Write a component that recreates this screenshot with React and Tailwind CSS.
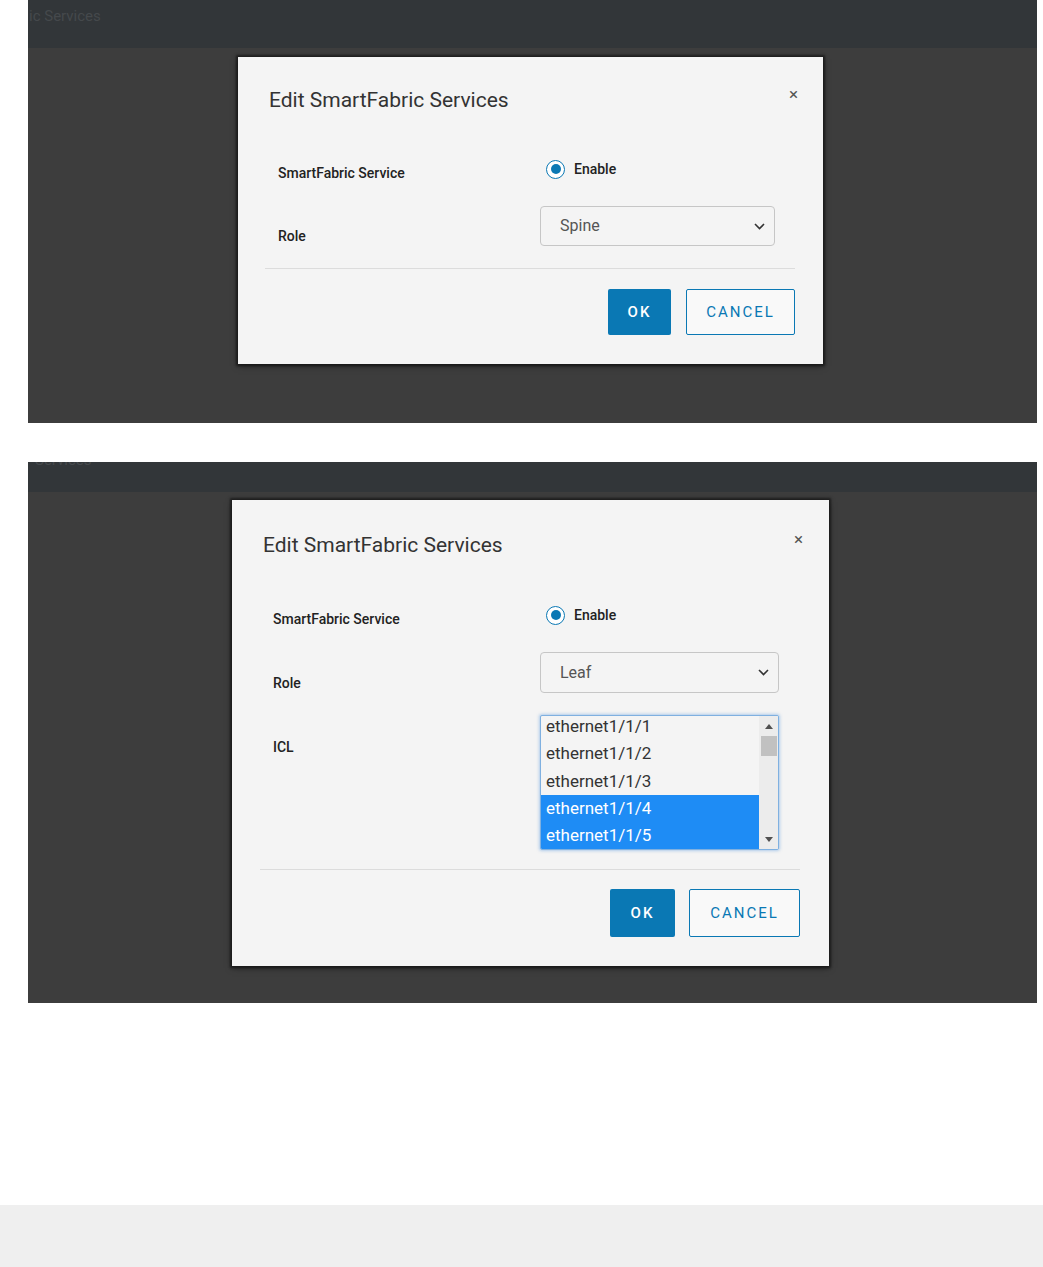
import React from "react";

const font = { fontFamily: "Roboto, 'Liberation Sans', sans-serif" };

const Radio = () => (
    <div className="flex items-center h-[22px]">
        <span className="w-[19px] h-[19px] rounded-full border-[1.5px] border-[#0a78b4] bg-white flex items-center justify-center">
            <span className="w-[10px] h-[10px] rounded-full bg-[#0a78b4]" />
        </span>
        <span className="ml-[9px] text-[14px] font-medium text-[#222]">Enable</span>
    </div>
);

const Chevron = () => (
    <svg width="11" height="7" viewBox="0 0 11 7" fill="none">
        <path d="M1 1l4.5 4.5L10 1" stroke="#333" strokeWidth="1.6" />
    </svg>
);

const Select = ({ value, width, height }) => (
    <div
        className={`flex items-center justify-between rounded-[4px] border border-[#c6c6c6] bg-[#f4f4f4] pl-[19px] pr-[9px] ${width} ${height}`}
    >
        <span className="text-[16px] text-[#555]">{value}</span>
        <Chevron />
    </div>
);

const Label = ({ children, offset }) => (
    <div className={`text-[14px] font-medium text-[#222] leading-[20px] ${offset}`}>{children}</div>
);

const Buttons = ({ okW, cancelW, h, gap }) => (
    <div className={`flex justify-end ${gap}`}>
        <button className={`${okW} ${h} rounded-[2px] bg-[#0a78b4] text-white text-[15px] font-medium tracking-[2px]`}>
            OK
        </button>
        <button className={`${cancelW} ${h} rounded-[2px] border border-[#0a78b4] bg-[#f9f9f9] text-[#0a78b4] text-[15px] tracking-[2px]`}>
            CANCEL
        </button>
    </div>
);

const IclList = () => {
    const items = ["ethernet1/1/1", "ethernet1/1/2", "ethernet1/1/3", "ethernet1/1/4", "ethernet1/1/5"];
    return (
        <div className="w-[239px] h-[135px] rounded-[2px] border border-[#7fb0e0] shadow-[0_0_3px_1px_rgba(110,165,225,0.5)] bg-[#f4f4f4] flex overflow-hidden">
            <div className="flex-1 overflow-hidden">
                <div className="-mt-[3px]">
                    {items.map((it, i) => (
                        <div
                            key={it}
                            className={`h-[27.3px] leading-[27px] pl-[5px] text-[17px] ${
                                i >= 3 ? "bg-[#1e8cf5] text-white" : "text-[#333]"
                            }`}
                        >
                            {it}
                        </div>
                    ))}
                </div>
            </div>
            <div className="w-[19px] bg-[#ececec] flex flex-col items-center">
                <div className="h-[20px] flex items-center justify-center">
                    <svg width="8" height="5" viewBox="0 0 8 5"><path d="M0 5L4 0l4 5z" fill="#505050" /></svg>
                </div>
                <div className="w-[16px] h-[20px] bg-[#c1c1c1]" />
                <div className="flex-1" />
                <div className="h-[20px] flex items-center justify-center">
                    <svg width="8" height="5" viewBox="0 0 8 5"><path d="M0 0h8L4 5z" fill="#505050" /></svg>
                </div>
            </div>
        </div>
    );
};

const DialogHead = ({ pt, px }) => (
    <div className={`flex justify-between ${pt} ${px}`}>
        <div className="text-[21px] leading-[26px] text-[#333]">Edit SmartFabric Services</div>
        <div className="text-[17px] leading-[16px] text-[#555] mt-[-1px]">×</div>
    </div>
);

export default function App() {
    return (
        <div className="min-h-[1267px] bg-white flex flex-col" style={font}>
            {/* first screenshot: spine */}
            <div className="ml-[28px] w-[1009px] h-[423px] bg-[#3d3d3d] flex flex-col overflow-hidden">
                <div className="h-[48px] shrink-0 bg-[#323639] overflow-hidden">
                    <div className="ml-[1px] mt-[5px] text-[15px] text-[#45494c]">ic Services</div>
                </div>
                <div className="ml-[210px] mt-[9px] w-[585px] h-[307px] bg-[#f4f4f4] shadow-[0_0_2px_2px_rgba(20,20,20,0.7),0_2px_6px_rgba(0,0,0,0.5)]">
                    <DialogHead pt="pt-[30px]" px="pl-[31px] pr-[25px]" />
                    <div className="mt-[45px] flex pl-[40px]">
                        <div className="w-[262px]">
                            <Label offset="pt-[5px]">SmartFabric Service</Label>
                        </div>
                        <div className="pl-[6px]">
                            <Radio />
                        </div>
                    </div>
                    <div className="mt-[23px] flex pl-[40px]">
                        <div className="w-[262px]">
                            <Label offset="pt-[20px]">Role</Label>
                        </div>
                        <Select value="Spine" width="w-[235px]" height="h-[40px]" />
                    </div>
                    <div className="mt-[22px] ml-[27px] mr-[28px] border-t border-[#dcdcdc]" />
                    <div className="mt-[20px] mr-[28px]">
                        <Buttons okW="w-[63px]" cancelW="w-[109px]" h="h-[46px]" gap="gap-[15px]" />
                    </div>
                </div>
            </div>

            {/* second screenshot: leaf */}
            <div className="mt-[39px] ml-[28px] w-[1009px] h-[541px] bg-[#3d3d3d] flex flex-col overflow-hidden">
                <div className="h-[30px] shrink-0 bg-[#323639] overflow-hidden">
                    <div className="ml-[7px] mt-[-13px] text-[15px] text-[#45494c]">Services</div>
                </div>
                <div className="ml-[204px] mt-[8px] w-[597px] h-[466px] bg-[#f4f4f4] shadow-[0_0_2px_2px_rgba(20,20,20,0.7),0_2px_6px_rgba(0,0,0,0.5)]">
                    <DialogHead pt="pt-[32px]" px="pl-[31px] pr-[26px]" />
                    <div className="mt-[46px] flex pl-[41px]">
                        <div className="w-[267px]">
                            <Label offset="pt-[5px]">SmartFabric Service</Label>
                        </div>
                        <div className="pl-[6px]">
                            <Radio />
                        </div>
                    </div>
                    <div className="mt-[23px] flex pl-[41px]">
                        <div className="w-[267px]">
                            <Label offset="pt-[21px]">Role</Label>
                        </div>
                        <Select value="Leaf" width="w-[239px]" height="h-[41px]" />
                    </div>
                    <div className="mt-[22px] flex pl-[41px]">
                        <div className="w-[267px]">
                            <Label offset="pt-[22px]">ICL</Label>
                        </div>
                        <IclList />
                    </div>
                    <div className="mt-[19px] ml-[28px] mr-[29px] border-t border-[#dcdcdc]" />
                    <div className="mt-[19px] mr-[29px]">
                        <Buttons okW="w-[65px]" cancelW="w-[111px]" h="h-[48px]" gap="gap-[14px]" />
                    </div>
                </div>
            </div>

            <div className="flex-1" />
            <div className="h-[62px] bg-[#efefef]" />
        </div>
    );
}
